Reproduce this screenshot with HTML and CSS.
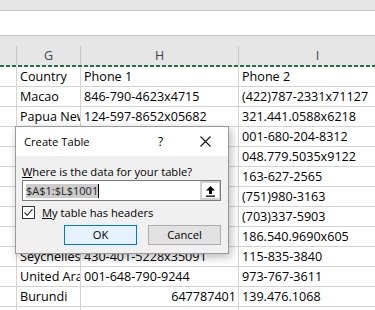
FILE: index.html
```html
<!DOCTYPE html>
<html>
<head>
<meta charset="utf-8">
<link rel="stylesheet" href="styles.css">
</head>
<body>
<div class="app">
  <div class="ribbon"></div>
  <div class="formula"></div>
  <div class="colhead">
    <div class="hc c0"></div>
    <div class="hc cg">G</div>
    <div class="hc ch">H</div>
    <div class="hc ci">I</div>
  </div>
  <div class="ants"></div>
  <div class="grid">
    <div class="row"><div class="c c0"></div><div class="c cg">Country</div><div class="c ch">Phone 1</div><div class="c ci">Phone 2</div></div>
    <div class="row"><div class="c c0"></div><div class="c cg">Macao</div><div class="c ch">846-790-4623x4715</div><div class="c ci">(422)787-2331x71127</div></div>
    <div class="row"><div class="c c0"></div><div class="c cg">Papua New Guinea</div><div class="c ch">124-597-8652x05682</div><div class="c ci">321.441.0588x6218</div></div>
    <div class="row"><div class="c c0"></div><div class="c cg"></div><div class="c ch"></div><div class="c ci">001-680-204-8312</div></div>
    <div class="row"><div class="c c0"></div><div class="c cg"></div><div class="c ch"></div><div class="c ci">048.779.5035x9122</div></div>
    <div class="row"><div class="c c0"></div><div class="c cg"></div><div class="c ch"></div><div class="c ci">163-627-2565</div></div>
    <div class="row"><div class="c c0"></div><div class="c cg"></div><div class="c ch"></div><div class="c ci">(751)980-3163</div></div>
    <div class="row"><div class="c c0"></div><div class="c cg"></div><div class="c ch"></div><div class="c ci">(703)337-5903</div></div>
    <div class="row"><div class="c c0"></div><div class="c cg"></div><div class="c ch"></div><div class="c ci">186.540.9690x605</div></div>
    <div class="row"><div class="c c0"></div><div class="c cg">Seychelles</div><div class="c ch">430-401-5228x35091</div><div class="c ci">115-835-3840</div></div>
    <div class="row"><div class="c c0"></div><div class="c cg">United Arab Emirates</div><div class="c ch">001-648-790-9244</div><div class="c ci">973-767-3611</div></div>
    <div class="row"><div class="c c0"></div><div class="c cg">Burundi</div><div class="c ch num">647787401</div><div class="c ci">139.476.1068</div></div>
    <div class="row"><div class="c c0"></div><div class="c cg"></div><div class="c ch"></div><div class="c ci"></div></div>
  </div>

  <div class="dialog">
    <div class="titlebar">
      <span class="title">Create Table</span>
      <span class="help">?</span>
      <svg class="close" width="11" height="11" viewBox="0 0 11 11"><path d="M0.5 0.5 L10.5 10.5 M10.5 0.5 L0.5 10.5" stroke="#111" stroke-width="1.1" fill="none"/></svg>
    </div>
    <div class="body">
      <div class="label"><u>W</u>here is the data for your table?</div>
      <div class="input">
        <div class="field"><span class="sel">$A$1:$L$1001</span><span class="caret"></span></div>
        <div class="refbtn">
          <svg width="11" height="12" viewBox="0 0 11 12"><path d="M5.5 1 L10 5.5 L7 5.5 L7 9 L4 9 L4 5.5 L1 5.5 Z" fill="#000"/><rect x="1" y="10.5" width="9" height="1.3" fill="#000"/></svg>
        </div>
      </div>
      <div class="check">
        <div class="box">
          <svg width="11" height="11" viewBox="0 0 11 11"><path d="M1.5 5.5 L4.2 8.3 L9.5 2.2" stroke="#333" stroke-width="1.2" fill="none"/></svg>
        </div>
        <span class="clabel"><u>M</u>y table has headers</span>
      </div>
      <div class="buttons">
        <div class="btn ok">OK</div>
        <div class="btn cancel">Cancel</div>
      </div>
    </div>
  </div>
</div>
</body>
</html>
```

FILE: styles.css
```css
html, body {
  margin: 0;
  padding: 0;
}
body {
  width: 375px;
  height: 310px;
  overflow: hidden;
  background: #fff;
  font-family: "Open Sans", "Noto Sans", sans-serif;
}
.app {
  position: relative;
  width: 375px;
  height: 310px;
  overflow: hidden;
}
.ribbon {
  height: 10px;
  background: #e6e6e6;
  border-bottom: 1px solid #c6c6c6;
}
.formula {
  height: 24px;
  background: #fff;
  border-bottom: 1px solid #c6c6c6;
}
.colhead {
  display: flex;
  background: #e6e6e6;
  padding-top: 10px;
  height: 19px;
}
.hc {
  box-sizing: border-box;
  flex: none;
  height: 19px;
  border-right: 1px solid #c6c6c6;
  font-size: 12.5px;
  line-height: 19px;
  color: #444;
  text-align: center;
}
.c0 { width: 17px; }
.cg { width: 64px; }
.ch { width: 158px; }
.ci { width: 158px; }
.ants {
  height: 2px;
  background: repeating-linear-gradient(90deg, #217346 0 4px, #e6e6e6 4px 6px);
}
.grid {
  display: flex;
  flex-direction: column;
}
.row {
  display: flex;
  height: 20px;
}
.c {
  box-sizing: border-box;
  flex: none;
  height: 20px;
  border-right: 1px solid #d4d4d4;
  border-bottom: 1px solid #d4d4d4;
  padding: 0 3px;
  font-size: 12.6px;
  line-height: 19px;
  color: #000;
  white-space: nowrap;
  overflow: hidden;
}
.num { text-align: right; padding-right: 2px; }

.dialog {
  position: absolute;
  left: 15px;
  top: 126px;
  width: 214px;
  box-sizing: border-box;
  border: 1px solid #9a9a9a;
  background: #f0f0f0;
  box-shadow: 2px 3px 9px rgba(0,0,0,0.28);
  font-size: 11.2px;
  color: #000;
}
.titlebar {
  height: 29px;
  background: #fff;
  display: flex;
  align-items: center;
  padding-left: 8px;
}
.title {
  flex: 1;
  font-size: 11.2px;
  line-height: 16px;
}
.help {
  width: 10px;
  font-size: 12px;
  margin-right: 32px;
}
.close {
  margin-right: 17px;
}
.body {
  padding: 8px 7px 8px 6px;
}
.label {
  line-height: 16px;
  height: 16px;
  white-space: nowrap;
}
.input {
  display: flex;
  height: 21px;
  box-sizing: border-box;
  border: 1px solid #7a7a7a;
  background: #fff;
}
.field {
  flex: 1;
  display: flex;
  align-items: center;
  padding-left: 3px;
}
.sel {
  background: #cccccc;
  color: #222;
  line-height: 14px;
  height: 14px;
  font-size: 11px;
}
.caret {
  width: 1px;
  height: 14px;
  background: #000;
}
.refbtn {
  width: 20px;
  box-sizing: border-box;
  border: 2px solid #d0d0d0;
  border-right-width: 1px;
  background: #fff;
  display: flex;
  align-items: center;
  justify-content: center;
}
.check {
  display: flex;
  align-items: center;
  margin-top: 5px;
  height: 13px;
}
.box {
  width: 13px;
  height: 13px;
  box-sizing: border-box;
  border: 1px solid #333;
  background: #fff;
  display: flex;
  align-items: center;
  justify-content: center;
  margin-right: 7px;
}
.clabel {
  line-height: 16px;
  white-space: nowrap;
}
.buttons {
  display: flex;
  margin-top: 6px;
  padding-left: 42px;
  gap: 11px;
}
.btn {
  width: 73px;
  height: 20px;
  box-sizing: border-box;
  text-align: center;
  line-height: 18px;
  font-size: 11.2px;
}
.ok {
  border: 1px solid #0078d7;
  background: #e5f1fb;
}
.cancel {
  border: 1px solid #adadad;
  background: #e1e1e1;
}
```
